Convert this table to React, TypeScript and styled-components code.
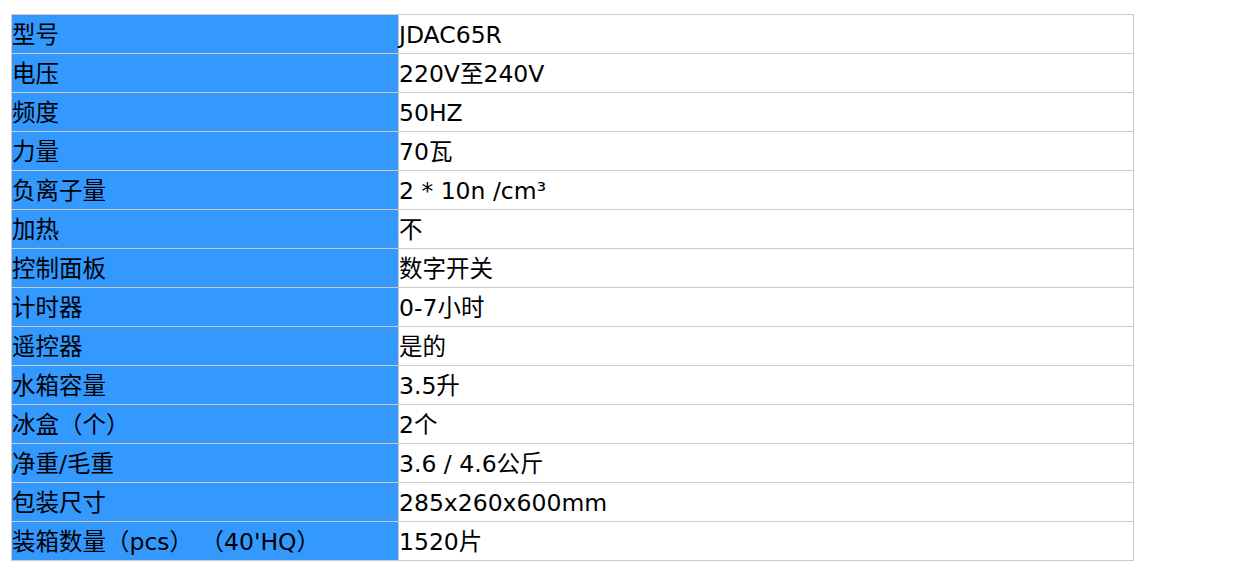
import React from 'react';
import styled, { createGlobalStyle } from 'styled-components';

const GlobalStyle = createGlobalStyle`
  body {
    margin: 0;
    background: #fff;
    font-family: "DejaVu Sans", "Noto Sans CJK SC", sans-serif;
  }
`;

const specs: [string, string][] = [
  ['型号', 'JDAC65R'],
  ['电压', '220V至240V'],
  ['频度', '50HZ'],
  ['力量', '70瓦'],
  ['负离子量', '2 * 10n /cm³'],
  ['加热', '不'],
  ['控制面板', '数字开关'],
  ['计时器', '0-7小时'],
  ['遥控器', '是的'],
  ['水箱容量', '3.5升'],
  ['冰盒（个）', '2个'],
  ['净重/毛重', '3.6 / 4.6公斤'],
  ['包装尺寸', '285x260x600mm'],
  ['装箱数量（pcs） （40\'HQ）', '1520片'],
];

export default function App() {
  return (
    <>
      <GlobalStyle />
      <SpecTable>
        <tbody>
          {specs.map(([label, value]) => (
            <tr key={label}>
              <Cell $label>{label}</Cell>
              <Cell>{value}</Cell>
            </tr>
          ))}
        </tbody>
      </SpecTable>
    </>
  );
}

const SpecTable = styled.table`
  border-collapse: collapse;
  width: 1123px;
  margin: 14px 0 0 11px;
  table-layout: fixed;
`;

const Cell = styled.td<{ $label?: boolean }>`
  width: ${(p) => (p.$label ? '387px' : 'auto')};
  height: 38px;
  padding: 2px 0 0 0;
  border: 1px solid #cbcbcb;
  background: ${(p) => (p.$label ? '#3399ff' : '#fff')};
  color: #000;
  font-size: 23.5px;
  line-height: 36px;
  white-space: pre;
  box-sizing: border-box;
`;
